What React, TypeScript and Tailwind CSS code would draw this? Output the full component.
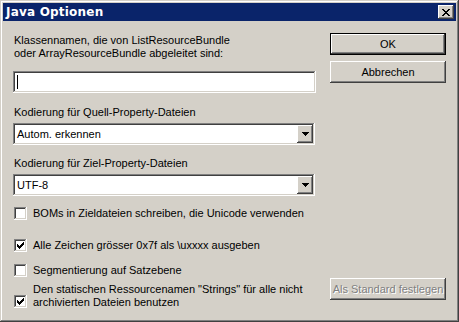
import React from "react";

const raised =
  "shadow-[inset_-1px_-1px_#404040,inset_1px_1px_#ffffff,inset_-2px_-2px_#808080,inset_2px_2px_#d4d0c8]";
const sunken =
  "shadow-[inset_-1px_-1px_#ffffff,inset_1px_1px_#808080,inset_-2px_-2px_#d4d0c8,inset_2px_2px_#404040]";

function Check() {
  const cols = [2, 3, 4, 3, 2, 1, 0];
  return (
    <svg width="7" height="7" viewBox="0 0 7 7" shapeRendering="crispEdges" className="absolute left-[3px] top-[3px]">
      {cols.map((y, x) => (
        <rect key={x} x={x} y={y} width="1" height="3" fill="#000" />
      ))}
    </svg>
  );
}

function CheckBox({ checked }: { checked: boolean }) {
  return (
    <div className={`relative w-[13px] h-[13px] bg-white shrink-0 ${sunken}`}>
      {checked && <Check />}
    </div>
  );
}

function Arrow() {
  return (
    <svg width="7" height="4" viewBox="0 0 7 4" shapeRendering="crispEdges">
      <rect x="0" y="0" width="7" height="1" fill="#000" />
      <rect x="1" y="1" width="5" height="1" fill="#000" />
      <rect x="2" y="2" width="3" height="1" fill="#000" />
      <rect x="3" y="3" width="1" height="1" fill="#000" />
    </svg>
  );
}

function Combo({ value }: { value: string }) {
  return (
    <div className={`relative h-[22px] w-[302px] bg-white flex items-center ${sunken}`}>
      <span className="pl-[4px] text-black">{value}</span>
      <div className={`absolute right-[2px] top-[2px] w-[16px] h-[18px] bg-[#d4d0c8] flex items-center justify-center ${raised}`}>
        <Arrow />
      </div>
    </div>
  );
}

function Button({ children, def, disabled }: { children: React.ReactNode; def?: boolean; disabled?: boolean }) {
  if (def) {
    return (
      <div className="w-[116px] h-[22px] border border-black">
        <div className={`w-full h-full flex items-center justify-center ${raised}`}>
          <span>{children}</span>
        </div>
      </div>
    );
  }
  return (
    <div className={`w-[116px] h-[22px] flex items-center justify-center ${raised}`}>
      <span className={disabled ? "text-[#808080] [text-shadow:1px_1px_0_#ffffff]" : ""}>{children}</span>
    </div>
  );
}

function XIcon() {
  const px: [number, number][] = [];
  for (let i = 0; i < 7; i++) {
    px.push([i, i], [i + 1, i], [6 - i, i], [7 - i, i]);
  }
  return (
    <svg width="8" height="7" viewBox="0 0 8 7" shapeRendering="crispEdges">
      {px.map(([x, y], k) => (
        <rect key={k} x={x} y={y} width="1" height="1" fill="#000" />
      ))}
    </svg>
  );
}

export default function App() {
  return (
    <div
      className={`w-[459px] h-[322px] bg-[#d4d0c8] p-[3px] flex flex-col text-[11px] leading-[13px] text-black shadow-[inset_-1px_-1px_#404040,inset_1px_1px_#d4d0c8,inset_-2px_-2px_#808080,inset_2px_2px_#ffffff]`}
      style={{ fontFamily: '"Liberation Sans", Arial, sans-serif' }}
    >
      <div className="h-[18px] bg-[#0a246a] flex items-center justify-between pl-[3px] pr-[2px]">
        <span className="text-white font-bold text-[12px] tracking-[0.2px]" style={{ fontFamily: '"DejaVu Sans", "Liberation Sans", sans-serif' }}>
          Java Optionen
        </span>
        <div className={`w-[16px] h-[14px] bg-[#d4d0c8] flex items-center justify-center ${raised}`}>
          <XIcon />
        </div>
      </div>
      <div className="flex-1 flex pl-[10px]">
        <div className="w-[303px] flex flex-col">
          <div className="mt-[13px] pl-[1px]">
            Klassennamen, die von ListResourceBundle
            <br />
            oder ArrayResourceBundle abgeleitet sind:
          </div>
          <div className={`mt-[11px] h-[22px] w-[303px] bg-white relative ${sunken}`}>
            <div className="absolute left-[4px] top-[4px] w-[1px] h-[14px] bg-black" />
          </div>
          <div className="mt-[13px] pl-[1px]">Kodierung für Quell-Property-Dateien</div>
          <div className="mt-[4px]">
            <Combo value="Autom. erkennen" />
          </div>
          <div className="mt-[12px] pl-[1px]">Kodierung für Ziel-Property-Dateien</div>
          <div className="mt-[4px]">
            <Combo value="UTF-8" />
          </div>
          <div className="mt-[11px] flex items-center gap-[6px] pl-[1px]">
            <CheckBox checked={false} />
            <span>BOMs in Zieldateien schreiben, die Unicode verwenden</span>
          </div>
          <div className="mt-[19px] flex items-center gap-[6px] pl-[1px]">
            <CheckBox checked={true} />
            <span>Alle Zeichen grösser 0x7f als \uxxxx ausgeben</span>
          </div>
          <div className="mt-[12px] flex items-center gap-[6px] pl-[1px]">
            <CheckBox checked={false} />
            <span>Segmentierung auf Satzebene</span>
          </div>
          <div className="mt-[6px] flex items-start gap-[6px] pl-[1px]">
            <div className="mt-[12px]">
              <CheckBox checked={true} />
            </div>
            <span>
              Den statischen Ressourcenamen "Strings" für alle nicht
              <br />
              archivierten Dateien benutzen
            </span>
          </div>
        </div>
        <div className="ml-[14px] w-[116px] flex flex-col pb-[19px]">
          <div className="mt-[12px]">
            <Button def>OK</Button>
          </div>
          <div className="mt-[6px]">
            <Button>Abbrechen</Button>
          </div>
          <div className="mt-auto">
            <Button disabled>Als Standard festlegen</Button>
          </div>
        </div>
      </div>
    </div>
  );
}
